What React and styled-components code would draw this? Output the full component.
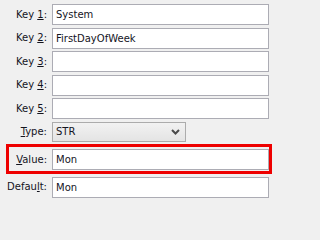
import React from 'react';
import styled, { createGlobalStyle } from 'styled-components';

const GlobalStyle = createGlobalStyle`
  html, body {
    margin: 0;
    padding: 0;
    background: #f0f0f0;
  }
  body {
    font-family: Tahoma, "DejaVu Sans", sans-serif;
    font-size: 10px;
    color: #14141e;
  }
`;

const Form = styled.div`
  width: 273px;
  height: 200px;
  box-sizing: border-box;
  padding: 4px 4px 0 0;
  display: flex;
  flex-direction: column;
  gap: 2.5px;
`;

const Row = styled.div`
  position: relative;
  display: grid;
  grid-template-columns: 47px 1fr;
  column-gap: 5px;
  align-items: center;
  margin: ${p => (p.highlight ? '5px 0 4px' : '0')};

  &::after {
    content: '';
    display: ${p => (p.highlight ? 'block' : 'none')};
    position: absolute;
    left: 6px;
    right: -3px;
    top: -5px;
    bottom: -4px;
    border: 3px solid #ee0000;
    pointer-events: none;
  }
`;

const Label = styled.label`
  text-align: right;
  white-space: nowrap;
  line-height: 1;
`;

const Key = styled.u`
  text-decoration: underline;
  text-underline-offset: 1px;
`;

const TextBox = styled.div`
  height: 21px;
  box-sizing: border-box;
  border: 1px solid #acacb4;
  background: #fff;
  padding: 0 3px;
  display: flex;
  align-items: center;
  white-space: nowrap;
`;

const SelectBox = styled.div`
  width: 134px;
  height: 20px;
  box-sizing: border-box;
  border: 1px solid #acacac;
  background: linear-gradient(#f2f2f2, #e4e4e4);
  padding: 0 5px 0 3px;
  display: flex;
  align-items: center;
  justify-content: space-between;
`;

const Chevron = () => (
  <svg width="9" height="6" viewBox="0 0 9 6">
    <polyline points="1,1 4.5,4.5 8,1" fill="none" stroke="#4a4a4a" strokeWidth="2" />
  </svg>
);

const keys = [
  { n: '1', value: 'System' },
  { n: '2', value: 'FirstDayOfWeek' },
  { n: '3', value: '' },
  { n: '4', value: '' },
  { n: '5', value: '' },
];

export default function App() {
  return (
    <>
      <GlobalStyle />
      <Form>
        {keys.map(k => (
          <Row key={k.n}>
            <Label>Key <Key>{k.n}</Key>:</Label>
            <TextBox>{k.value}</TextBox>
          </Row>
        ))}
        <Row>
          <Label><Key>T</Key>ype:</Label>
          <SelectBox>
            <span>STR</span>
            <Chevron />
          </SelectBox>
        </Row>
        <Row highlight>
          <Label><Key>V</Key>alue:</Label>
          <TextBox>Mon</TextBox>
        </Row>
        <Row>
          <Label>Defau<Key>l</Key>t:</Label>
          <TextBox>Mon</TextBox>
        </Row>
      </Form>
    </>
  );
}
